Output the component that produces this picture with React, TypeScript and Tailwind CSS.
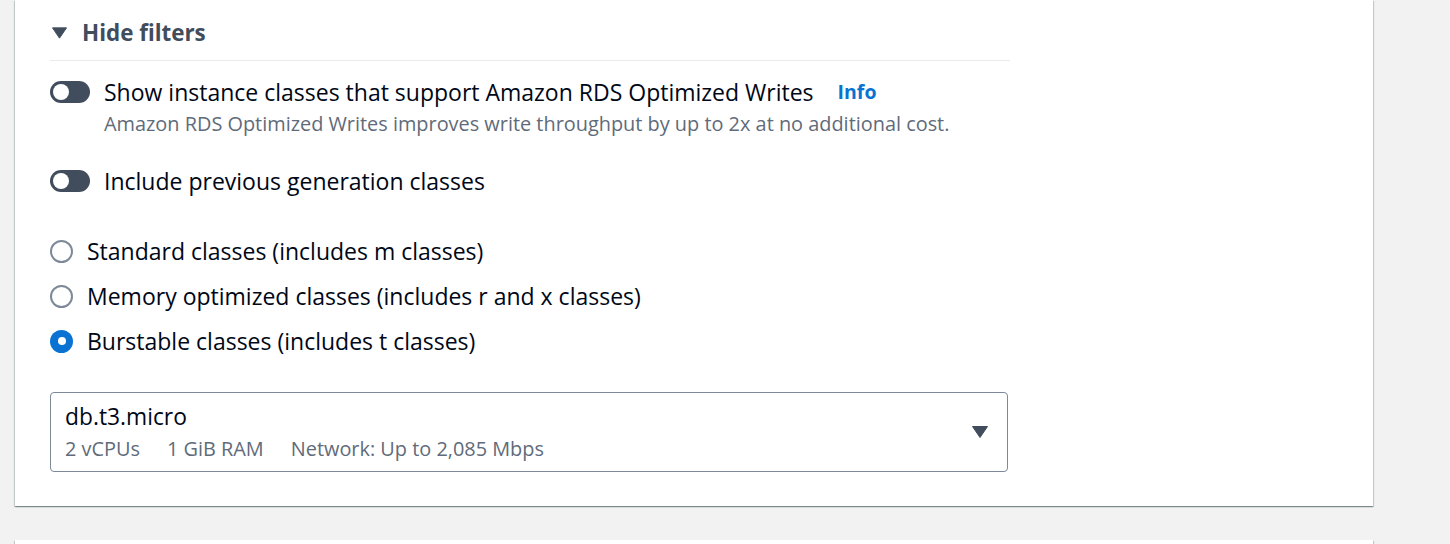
import React from "react";

function Toggle() {
    return (
        <span className="flex items-center w-[40px] h-[22px] rounded-full bg-[#414d5c] px-[3px] shrink-0">
            <span className="w-[16px] h-[16px] rounded-full bg-white" />
        </span>
    );
}

function Radio({ checked }: { checked?: boolean }) {
    if (checked) {
        return (
            <span className="w-[23px] h-[23px] rounded-full bg-[#0972d3] flex items-center justify-center shrink-0">
                <span className="w-[8px] h-[8px] rounded-full bg-white" />
            </span>
        );
    }
    return <span className="w-[23px] h-[23px] rounded-full border-2 border-[#7d8998] bg-white shrink-0" />;
}

function Caret({ className }: { className?: string }) {
    return (
        <svg viewBox="0 0 16 12" className={className}>
            <path d="M0.5 0.5 H15.5 L8 11.5 Z" fill="#414d5c" stroke="#414d5c" strokeLinejoin="round" />
        </svg>
    );
}

const cardShadow = "shadow-[0_1px_1px_0_rgba(0,28,36,0.3),1px_1px_1px_0_rgba(0,28,36,0.15),-1px_1px_1px_0_rgba(0,28,36,0.15)]";

export default function App() {
    const radios = [
        { label: "Standard classes (includes m classes)", checked: false },
        { label: "Memory optimized classes (includes r and x classes)", checked: false },
        { label: "Burstable classes (includes t classes)", checked: true },
    ];

    return (
        <div className="h-[544px] bg-[#f2f2f2] pl-[15px] pr-[77px] overflow-hidden" style={{ fontFamily: '"Open Sans", "Noto Sans", sans-serif' }}>
            <div className={`bg-white ${cardShadow} pl-[35px] pt-[19px] pb-[34px]`}>
                <div className="w-[960px]">
                    <div className="flex items-center h-[28px] gap-[15px] pl-[2px]">
                        <Caret className="w-[15px] h-[12px]" />
                        <span className="text-[22.4px] font-bold text-[#414d5c] leading-[28px]">Hide filters</span>
                    </div>
                    <div className="mt-[13px] border-t border-[#e9ebed]" />

                    <div className="mt-[17px] flex items-center gap-[14px] h-[28px]">
                        <Toggle />
                        <span className="text-[23px] leading-[28px] text-[#000716]">Show instance classes that support Amazon RDS Optimized Writes</span>
                        <span className="ml-[10px] text-[19.5px] font-bold text-[#0972d3] leading-[28px]">Info</span>
                    </div>
                    <div className="mt-[6px] pl-[54px] text-[19.9px] leading-[24px] text-[#5f6b7a]">
                        Amazon RDS Optimized Writes improves write throughput by up to 2x at no additional cost.
                    </div>

                    <div className="mt-[31px] flex items-center gap-[14px] h-[28px]">
                        <Toggle />
                        <span className="text-[23px] leading-[28px] text-[#000716]">Include previous generation classes</span>
                    </div>

                    <div className="mt-[42px] flex flex-col gap-[17px]">
                        {radios.map((r) => (
                            <div key={r.label} className="flex items-center gap-[14px] h-[28px]">
                                <Radio checked={r.checked} />
                                <span className="text-[23px] leading-[28px] text-[#000716]">{r.label}</span>
                            </div>
                        ))}
                    </div>

                    <div className="mt-[37px] w-[958px] h-[80px] border border-[#7d8998] rounded-[4px] flex items-center pl-[14px] pr-[19px]">
                        <div className="flex-1 flex flex-col">
                            <span className="text-[22.8px] leading-[28px] text-[#000716]">db.t3.micro</span>
                            <div className="mt-[6px] flex gap-[27px] text-[19.9px] leading-[24px] text-[#5f6b7a]">
                                <span>2 vCPUs</span>
                                <span>1 GiB RAM</span>
                                <span>Network: Up to 2,085 Mbps</span>
                            </div>
                        </div>
                        <Caret className="w-[16px] h-[12px]" />
                    </div>
                </div>
            </div>
            <div className={`mt-[34px] h-[40px] bg-white ${cardShadow}`} />
        </div>
    );
}
